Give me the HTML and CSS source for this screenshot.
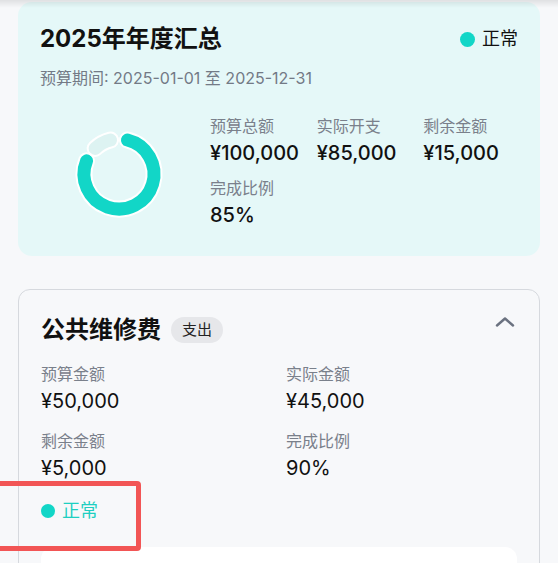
FILE: index.html
```html
<!DOCTYPE html>
<html lang="zh-CN">
<head>
    <meta charset="UTF-8">
    <meta name="viewport" content="width=device-width, initial-scale=1.0">
    <title>预算汇总</title>
    <link rel="stylesheet" href="styles.css">
</head>
<body>

    <div class="top-shade"></div>

    <main class="page">
        <section class="summary">
            <div class="summary-head">
                <h1>2025年年度汇总</h1>
                <div class="status"><span class="dot"></span>正常</div>
            </div>
            <p class="period">预算期间: 2025-01-01 至 2025-12-31</p>

            <div class="summary-body">
                <div class="chart">
                    <svg width="100" height="100" viewBox="0 0 100 100">
                        <path class="ring-edge" d="M58.47 16.04 A35 35 0 1 1 17.55 36.89"/>
                        <path class="ring-used" d="M58.47 16.04 A35 35 0 1 1 17.55 36.89"/>
                        <path class="ring-edge" d="M26.13 24.40 A35 35 0 0 1 41.53 16.04"/>
                        <path class="ring-left" d="M26.13 24.40 A35 35 0 0 1 41.53 16.04"/>
                    </svg>
                </div>
                <div class="stats stats-3">
                    <div class="stat"><div class="label">预算总额</div><div class="value">¥100,000</div></div>
                    <div class="stat"><div class="label">实际开支</div><div class="value">¥85,000</div></div>
                    <div class="stat"><div class="label">剩余金额</div><div class="value">¥15,000</div></div>
                    <div class="stat"><div class="label">完成比例</div><div class="value">85%</div></div>
                </div>
            </div>
        </section>

        <section class="item">
            <div class="item-head">
                <div class="item-title">
                    <h2>公共维修费</h2>
                    <span class="tag">支出</span>
                </div>
                <svg class="chevron" width="20" height="10" viewBox="0 0 20 10">
                    <path d="M2 8.5 L10 1.5 L18 8.5"/>
                </svg>
            </div>

            <div class="stats stats-2">
                <div class="stat"><div class="label">预算金额</div><div class="value">¥50,000</div></div>
                <div class="stat"><div class="label">实际金额</div><div class="value">¥45,000</div></div>
                <div class="stat"><div class="label">剩余金额</div><div class="value">¥5,000</div></div>
                <div class="stat"><div class="label">完成比例</div><div class="value">90%</div></div>
            </div>

            <div class="status status-teal"><span class="dot"></span>正常</div>

            <div class="detail"></div>
        </section>
    </main>

    <div class="annotation"></div>

</body>
</html>
```

FILE: styles.css
```css
body {
    margin: 0;
    background-color: #F7F8FA;
    font-family: Inter, "Noto Sans CJK SC", sans-serif;
    color: #111;
    overflow: hidden;
}
.top-shade {
    position: fixed;
    top: 0; left: 0;
    width: 100%; height: 8px;
    background: linear-gradient(rgba(0, 0, 0, 0.09), rgba(0, 0, 0, 0));
    z-index: 2;
}
.page {
    padding: 2px 18px 0;
    display: flex;
    flex-direction: column;
    gap: 33px;
}
.summary {
    background-color: #E5F8F8;
    border-radius: 14px;
    padding: 21px 22px 27px;
}
.summary-head {
    display: flex;
    justify-content: space-between;
    align-items: center;
}
h1, h2 {
    margin: 0;
    font-size: 24px;
    line-height: 32px;
    font-weight: 700;
}
.status {
    display: flex;
    align-items: center;
    gap: 7px;
    font-size: 18px;
    line-height: 24px;
}
.dot {
    width: 15px;
    height: 15px;
    border-radius: 50%;
    background-color: #12D6C7;
}
.period {
    margin: 11px 0 0;
    font-size: 16px;
    line-height: 24px;
    color: #737A86;
}
.summary-body {
    display: flex;
    align-items: center;
    gap: 12px;
    margin-top: 25px;
}
.chart {
    width: 158px;
    display: flex;
    justify-content: center;
    padding-top: 3px;
}
.ring-edge {
    fill: none;
    stroke: #fff;
    stroke-width: 17;
    stroke-linecap: round;
}
.ring-used {
    fill: none;
    stroke: #12D6C7;
    stroke-width: 13;
    stroke-linecap: round;
}
.ring-left {
    fill: none;
    stroke: #DDF3F2;
    stroke-width: 13;
    stroke-linecap: round;
}
.stats {
    flex: 1;
    display: grid;
}
.stats-3 {
    grid-template-columns: repeat(3, 1fr);
    column-gap: 12px;
    row-gap: 10px;
}
.stats-2 {
    grid-template-columns: repeat(2, 1fr);
    column-gap: 14px;
    row-gap: 15px;
    margin-top: 17px;
}
.label {
    font-size: 16px;
    line-height: 22px;
    color: #7A808B;
}
.value {
    margin-top: 2px;
    font-size: 20px;
    line-height: 28px;
    white-space: nowrap;
}
.stats-3 .value {
    font-weight: 500;
}
.item {
    border: 1px solid #D6D9DE;
    border-radius: 12px;
    padding: 24px 22px 0;
    height: 400px;
}
.item-head {
    display: flex;
    justify-content: space-between;
}
.item-title {
    display: flex;
    align-items: center;
    gap: 10px;
}
.tag {
    background-color: #E6E7EA;
    border-radius: 13px;
    padding: 0 11px;
    font-size: 15px;
    line-height: 26px;
    color: #222;
}
.chevron {
    margin-top: 3px;
    margin-right: 2px;
}
.chevron path {
    fill: none;
    stroke: #6B7280;
    stroke-width: 2.4;
    stroke-linecap: round;
    stroke-linejoin: round;
}
.status-teal {
    margin-top: 17px;
    color: #1ECFC1;
}
.status-teal .dot {
    width: 14px;
    height: 14px;
}
.detail {
    margin-top: 24px;
    height: 80px;
    background-color: #fff;
    border-radius: 12px;
}
.annotation {
    position: absolute;
    top: 481px;
    left: -20px;
    width: 151px;
    height: 60px;
    border: 5px solid #F25555;
    border-radius: 4px;
}
```
